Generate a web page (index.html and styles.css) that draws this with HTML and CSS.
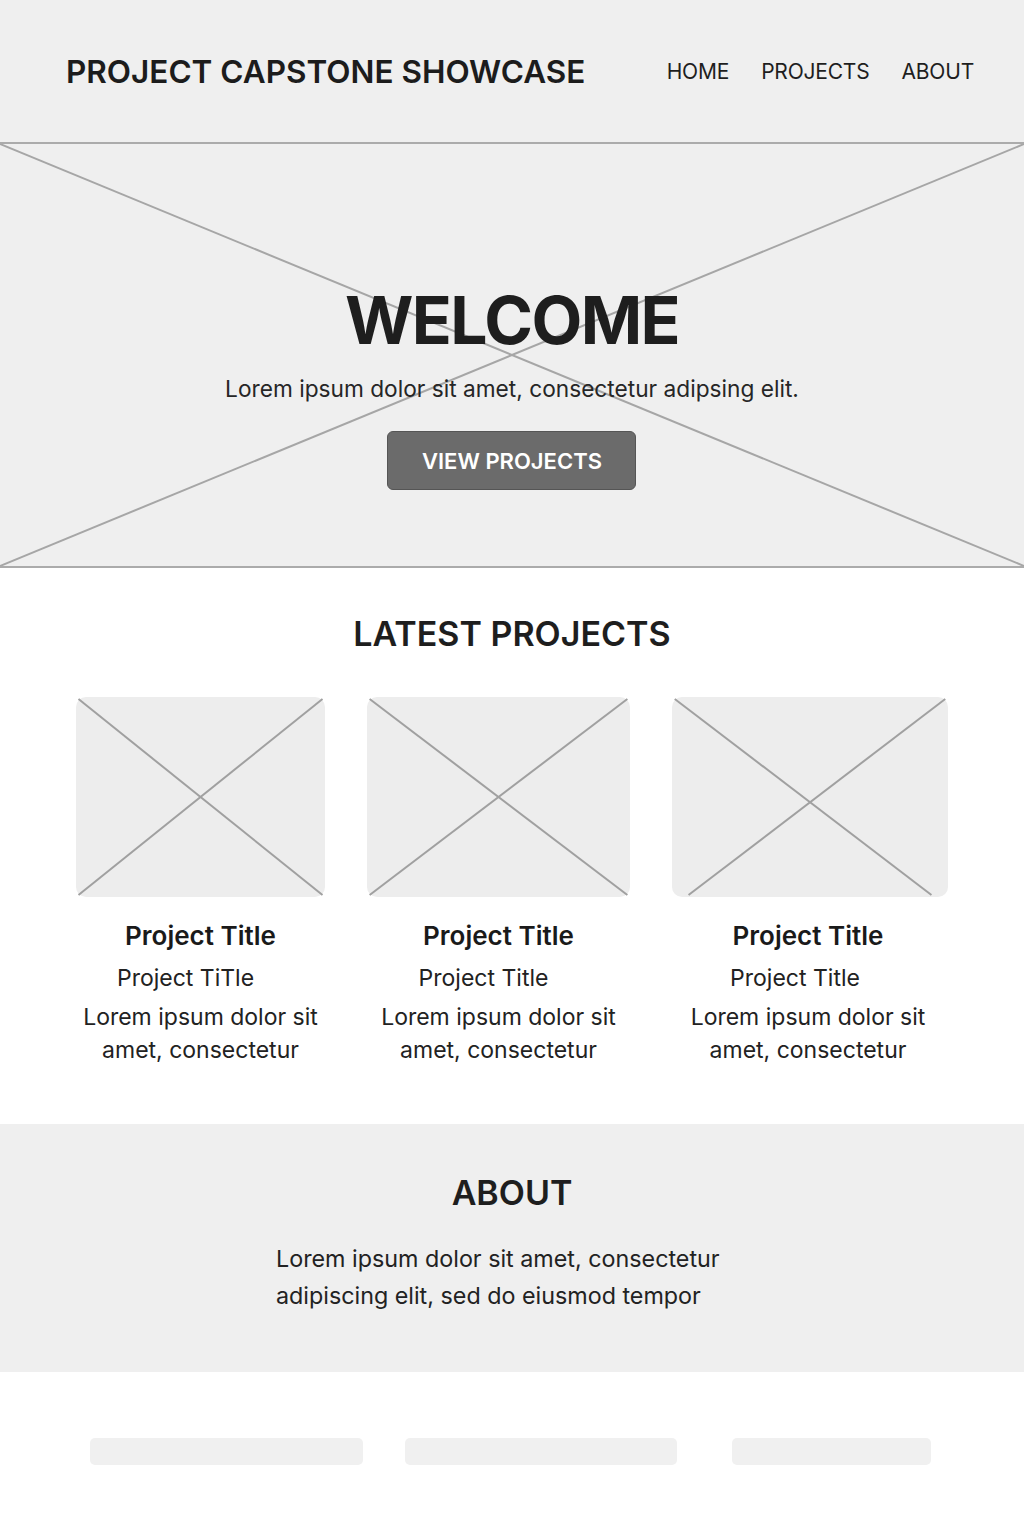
FILE: index.html
```html
<!DOCTYPE html>
<html lang="en">
<head>
<meta charset="utf-8">
<title>Project Capstone Showcase</title>
<link rel="stylesheet" href="styles.css">
</head>
<body>
<header class="site-header">
  <div class="brand">PROJECT CAPSTONE SHOWCASE</div>
  <nav class="nav">
    <a href="#">HOME</a>
    <a href="#">PROJECTS</a>
    <a href="#">ABOUT</a>
  </nav>
</header>

<section class="hero">
  <svg class="hero-x" viewBox="0 0 1024 423" preserveAspectRatio="none" aria-hidden="true">
    <line x1="0" y1="0" x2="1024" y2="423"/>
    <line x1="1024" y1="0" x2="0" y2="423"/>
  </svg>
  <div class="hero-content">
    <h1 class="hero-title">WELCOME</h1>
    <p class="hero-sub">Lorem ipsum dolor sit amet, consectetur adipsing elit.</p>
    <a class="btn" href="#">VIEW PROJECTS</a>
  </div>
</section>

<section class="latest">
  <h2 class="section-title">LATEST PROJECTS</h2>
  <div class="cards">
    <article class="card">
      <div class="thumb">
        <svg viewBox="0 0 100 100" preserveAspectRatio="none" aria-hidden="true">
          <line x1="1" y1="1" x2="99" y2="99"/><line x1="99" y1="1" x2="1" y2="99"/>
        </svg>
      </div>
      <h3 class="card-title">Project Title</h3>
      <p class="card-sub">Project TiTle</p>
      <p class="card-text">Lorem ipsum dolor sit<br>amet, consectetur</p>
    </article>
    <article class="card">
      <div class="thumb">
        <svg viewBox="0 0 100 100" preserveAspectRatio="none" aria-hidden="true">
          <line x1="1" y1="1" x2="99" y2="99"/><line x1="99" y1="1" x2="1" y2="99"/>
        </svg>
      </div>
      <h3 class="card-title">Project Title</h3>
      <p class="card-sub">Project Title</p>
      <p class="card-text">Lorem ipsum dolor sit<br>amet, consectetur</p>
    </article>
    <article class="card card-last">
      <div class="thumb">
        <svg viewBox="0 0 100 100" preserveAspectRatio="none" aria-hidden="true">
          <line x1="1" y1="1" x2="94" y2="99"/><line x1="99" y1="1" x2="6" y2="99"/>
        </svg>
      </div>
      <h3 class="card-title">Project Title</h3>
      <p class="card-sub">Project Title</p>
      <p class="card-text">Lorem ipsum dolor sit<br>amet, consectetur</p>
    </article>
  </div>
</section>

<section class="about">
  <h2 class="section-title">ABOUT</h2>
  <p class="about-text">Lorem ipsum dolor sit amet, consectetur<br>adipiscing elit, sed do eiusmod tempor</p>
</section>

<footer class="footer">
  <span class="pill pill-a"></span>
  <span class="pill pill-b"></span>
  <span class="pill pill-c"></span>
</footer>
</body>
</html>
```

FILE: styles.css
```css
* { box-sizing: border-box; }
html, body { margin: 0; padding: 0; }
body {
  font-family: Inter, "Noto Sans", "Liberation Sans", sans-serif;
  color: #1e1e1e;
  background: #ffffff;
  width: 1024px;
}
a { color: inherit; text-decoration: none; }
h1, h2, h3, p { margin: 0; }

.site-header {
  height: 142px;
  background: #efefef;
  display: flex;
  align-items: center;
  justify-content: space-between;
  padding: 0 50px 0 66px;
}
.brand {
  font-size: 31.5px;
  font-weight: 600;
  letter-spacing: 0;
  color: #1c1c1c;
}
.nav {
  display: flex;
  gap: 32px;
  font-size: 21px;
  font-weight: 400;
  letter-spacing: -0.2px;
}

.hero {
  position: relative;
  height: 426px;
  background: #efefef;
  border-top: 2px solid #ababab;
  border-bottom: 2px solid #ababab;
  display: flex;
  justify-content: center;
  align-items: flex-start;
  overflow: hidden;
}
.hero-x {
  position: absolute;
  left: 0; top: 0;
  width: 100%; height: 100%;
}
.hero-x line { stroke: #a6a6a6; stroke-width: 2; vector-effect: non-scaling-stroke; }
.hero-content {
  position: relative;
  display: flex;
  flex-direction: column;
  align-items: center;
  padding-top: 143px;
}
.hero-title {
  font-size: 66px;
  font-weight: 700;
  letter-spacing: -1.6px;
  line-height: 1;
  color: #1e1e1e;
}
.hero-sub {
  margin-top: 22px;
  font-size: 22.7px;
  font-weight: 400;
  color: #262626;
}
.btn {
  margin-top: 29px;
  width: 249px;
  height: 59px;
  display: flex;
  align-items: center;
  justify-content: center;
  background: #6b6b6b;
  border: 1px solid #555;
  border-radius: 6px;
  color: #fff;
  font-size: 22px;
  font-weight: 600;
}

.latest {
  padding-top: 46px;
  height: 556px;
}
.section-title {
  text-align: center;
  font-size: 34px;
  font-weight: 600;
  color: #1e1e1e;
  line-height: 40px;
}
.cards {
  margin-top: 43px;
  display: grid;
  grid-template-columns: 249px 263px 276px;
  column-gap: 42px;
  justify-content: center;
}
.card {
  display: flex;
  flex-direction: column;
  align-items: center;
  text-align: center;
}
.thumb {
  width: 100%;
  height: 200px;
  background: #ededed;
  border-radius: 10px;
}
.thumb svg { width: 100%; height: 100%; display: block; }
.thumb line { stroke: #a0a0a0; stroke-width: 2; vector-effect: non-scaling-stroke; }
.card-title {
  margin-top: 23px;
  font-size: 26px;
  font-weight: 600;
  line-height: 32px;
  color: #1a1a1a;
}
.card-sub {
  margin-top: 11px;
  padding-right: 30px;
  font-size: 23px;
  line-height: 30px;
  color: #222;
}
.card-text {
  margin-top: 8px;
  font-size: 23px;
  line-height: 33px;
  color: #222;
}
.card-last .card-title,
.card-last .card-text { margin-right: 4px; }

.about {
  height: 248px;
  background: #efefef;
  padding-top: 49px;
  display: flex;
  flex-direction: column;
  align-items: center;
}
.about-text {
  margin-top: 27px;
  width: 472px;
  font-size: 23.3px;
  line-height: 37px;
  color: #222;
}

.footer {
  height: 165px;
  display: flex;
  align-items: flex-start;
  padding-top: 66px;
  padding-left: 90px;
}
.pill {
  display: block;
  height: 27px;
  background: #f0f0f0;
  border-radius: 5px;
}
.pill-a { width: 273px; }
.pill-b { width: 272px; margin-left: 42px; }
.pill-c { width: 199px; margin-left: 55px; }
```
